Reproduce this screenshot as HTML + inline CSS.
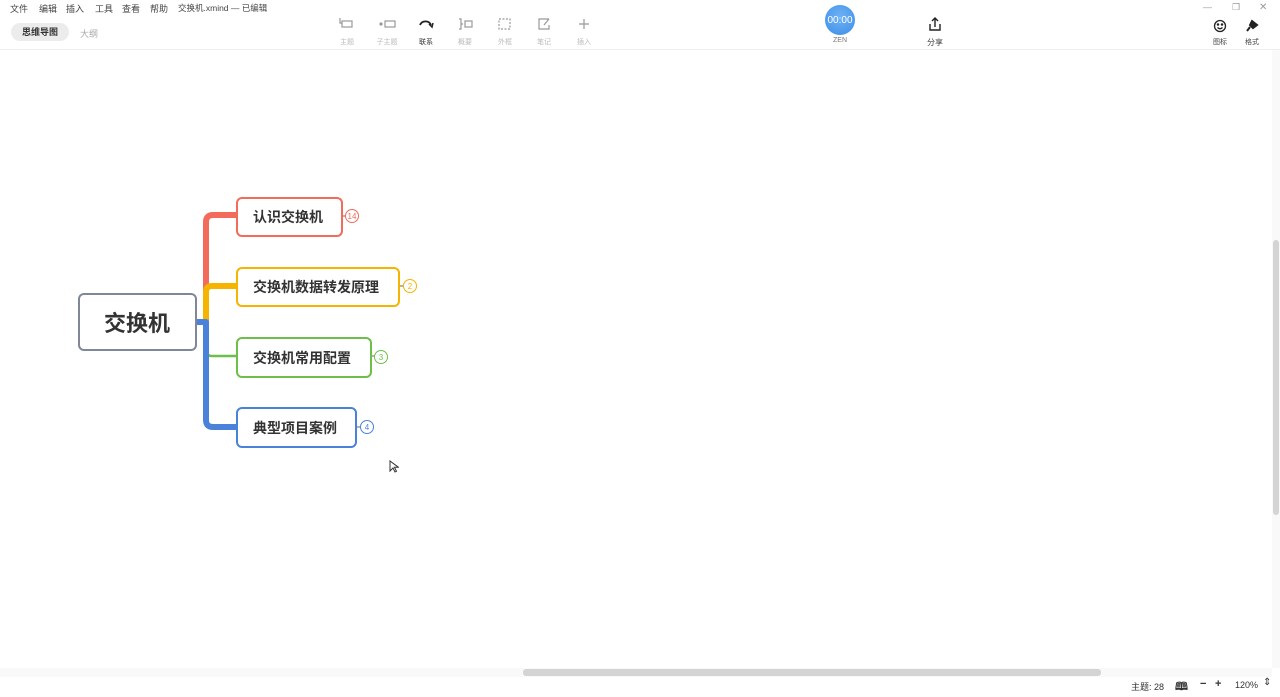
<!DOCTYPE html>
<html><head><meta charset="utf-8"><style>
*{margin:0;padding:0;box-sizing:border-box}
body{width:1280px;height:692px;overflow:hidden;background:#fff;font-family:"Liberation Sans","Noto Sans CJK SC",sans-serif;position:relative;color:#333}
.a{position:absolute}
.menu{top:2px;font-size:9px;color:#444}
.tb{font-size:7px;color:#bbb;text-align:center;width:30px}
.box{position:absolute;border:2.5px solid;border-radius:6px;background:#fff;font-weight:bold;font-size:14px;color:#333;display:flex;align-items:center;padding-left:15px}
.bd{position:absolute;width:14px;height:14px;border:1.2px solid;border-radius:50%;font-size:8px;display:flex;align-items:center;justify-content:center;background:#fff}
</style></head><body>
<div class="a menu" style="left:10px">文件</div>
<div class="a menu" style="left:39px">编辑</div>
<div class="a menu" style="left:66px">插入</div>
<div class="a menu" style="left:95px">工具</div>
<div class="a menu" style="left:122px">查看</div>
<div class="a menu" style="left:150px">帮助</div>
<div class="a menu" style="left:178px;font-size:8.5px">交换机.xmind — 已编辑</div>
<div class="a" style="left:11px;top:23px;width:58px;height:18px;border-radius:9px;background:#ececec;font-size:9px;font-weight:bold;text-align:center;line-height:18px;color:#333">思维导图</div>
<div class="a" style="left:80px;top:27px;font-size:9px;color:#aaa">大纲</div>
<svg class="a" style="left:330px;top:14px" width="280" height="20" fill="none" stroke="#999" stroke-width="1.2">
<rect x="12" y="7" width="10" height="6"/><path d="M10 4v5h2"/>
<circle cx="51" cy="10" r="1" fill="#999"/><rect x="55" y="7" width="10" height="6"/>
<path d="M90 11a6 6 0 0 1 11 0" stroke="#222" stroke-width="1.8"/><path d="M99 10l3 3 1-4" stroke="#222" stroke-width="1.5"/>
<path d="M129 5h2v10h-2M131 10h2"/><rect x="135" y="7" width="7" height="6"/>
<rect x="169" y="5" width="11" height="10" stroke-dasharray="2 1.5"/>
<path d="M219 5h-10v10h10v-4M214 11l5-6"/>
<path d="M254 5v10M249 10h10"/>
</svg>
<div class="a tb" style="left:332px;top:37px">主题</div>
<div class="a tb" style="left:372px;top:37px">子主题</div>
<div class="a tb" style="left:411px;top:37px;color:#333">联系</div>
<div class="a tb" style="left:450px;top:37px">概要</div>
<div class="a tb" style="left:490px;top:37px">外框</div>
<div class="a tb" style="left:529px;top:37px">笔记</div>
<div class="a tb" style="left:569px;top:37px">插入</div>
<div class="a" style="left:825px;top:5px;width:30px;height:30px;border-radius:50%;background:radial-gradient(circle at 50% 40%,#6fb2f5,#3b8ee8);color:#fff;font-size:10px;display:flex;align-items:center;justify-content:center">00:00</div>
<div class="a tb" style="left:825px;top:37px;color:#777">ZEN</div>
<svg class="a" style="left:927px;top:16px" width="16" height="16" fill="none" stroke="#222" stroke-width="1.4"><path d="M3 8v6h10V8M8 11V2M5 5l3-3 3 3"/></svg>
<div class="a tb" style="left:920px;top:37px;color:#444;font-size:8px">分享</div>
<div class="a" style="left:1203px;top:2px;font-size:9px;color:#999">—</div>
<div class="a" style="left:1232px;top:2px;font-size:9px;color:#999">❐</div>
<div class="a" style="left:1259px;top:2px;font-size:10px;color:#999">✕</div>
<svg class="a" style="left:1213px;top:19px" width="14" height="14" fill="none" stroke="#222" stroke-width="1.3"><circle cx="7" cy="7" r="5.5"/><path d="M4.5 8.5q2.5 2.5 5 0"/><circle cx="5" cy="5.5" r=".6" fill="#222"/><circle cx="9" cy="5.5" r=".6" fill="#222"/></svg>
<svg class="a" style="left:1245px;top:19px" width="14" height="14"><path d="M7 2l5 4-4 3-3-3zM5 8l-3 4" stroke="#222" stroke-width="2" fill="#222"/></svg>
<div class="a tb" style="left:1205px;top:37px;color:#444">图标</div>
<div class="a tb" style="left:1237px;top:37px;color:#444">格式</div>
<div class="a" style="left:0;top:49px;width:1280px;height:1px;background:#eee"></div>

<svg class="a" style="left:0;top:0" width="1280" height="692" fill="none" stroke-linecap="round">
<path d="M200 322h6M206 320V222q0-7 7-7h24" stroke="#f26b5b" stroke-width="6"/>
<path d="M206 318V292q0-6 6-6h25" stroke="#f5b400" stroke-width="6"/>
<path d="M206 322V350q0 6 6 6h25" stroke="#6cc04a" stroke-width="2.5"/>
<path d="M197 322h9M206 322V420q0 7 7 7h24" stroke="#4a82db" stroke-width="6"/>
<path d="M342 216h4M399 286h4M371 356h4M356 427h4" stroke-width="1.5" stroke="#999"/>
</svg>
<div class="box" style="left:78px;top:293px;width:119px;height:58px;border-color:#7f8799;font-size:22px;padding-left:24px">交换机</div>
<div class="box" style="left:236px;top:197px;width:107px;height:40px;border-color:#f26b5b">认识交换机</div>
<div class="box" style="left:236px;top:267px;width:164px;height:40px;border-color:#f5b400">交换机数据转发原理</div>
<div class="box" style="left:236px;top:337px;width:136px;height:41px;border-color:#6cc04a">交换机常用配置</div>
<div class="box" style="left:236px;top:407px;width:121px;height:41px;border-color:#4a82db">典型项目案例</div>
<div class="bd" style="left:345px;top:209px;border-color:#f26b5b;color:#f26b5b">14</div>
<div class="bd" style="left:403px;top:279px;border-color:#f5b400;color:#f5b400">2</div>
<div class="bd" style="left:374px;top:350px;border-color:#6cc04a;color:#6cc04a">3</div>
<div class="bd" style="left:360px;top:420px;border-color:#4a82db;color:#4a82db">4</div>
<svg class="a" style="left:389px;top:460px" width="10" height="14"><path d="M1 1v10l3-3 2 4 1.5-.7-2-4h4z" fill="#fff" stroke="#333" stroke-width="1"/></svg>

<div class="a" style="left:1272px;top:50px;width:8px;height:618px;background:#f9f9f9"></div>
<div class="a" style="left:1273px;top:240px;width:6px;height:275px;background:#d4d4d4;border-radius:3px"></div>
<div class="a" style="left:0;top:668px;width:1272px;height:9px;background:#f9f9f9"></div>
<div class="a" style="left:523px;top:669px;width:578px;height:7px;background:#d4d4d4;border-radius:3px"></div>
<div class="a" style="left:1131px;top:680px;font-size:9px;color:#333">主题: 28</div>
<div class="a" style="left:1175px;top:678px;font-size:11px;font-weight:bold;color:#333">🕮</div>
<div class="a" style="left:1200px;top:678px;font-size:11px;font-weight:bold;color:#333">−</div>
<div class="a" style="left:1215px;top:678px;font-size:11px;font-weight:bold;color:#333">+</div>
<div class="a" style="left:1235px;top:680px;font-size:9px;color:#333">120%</div>
<div class="a" style="left:1263px;top:677px;font-size:10px;color:#333">⇕</div>
</body></html>
